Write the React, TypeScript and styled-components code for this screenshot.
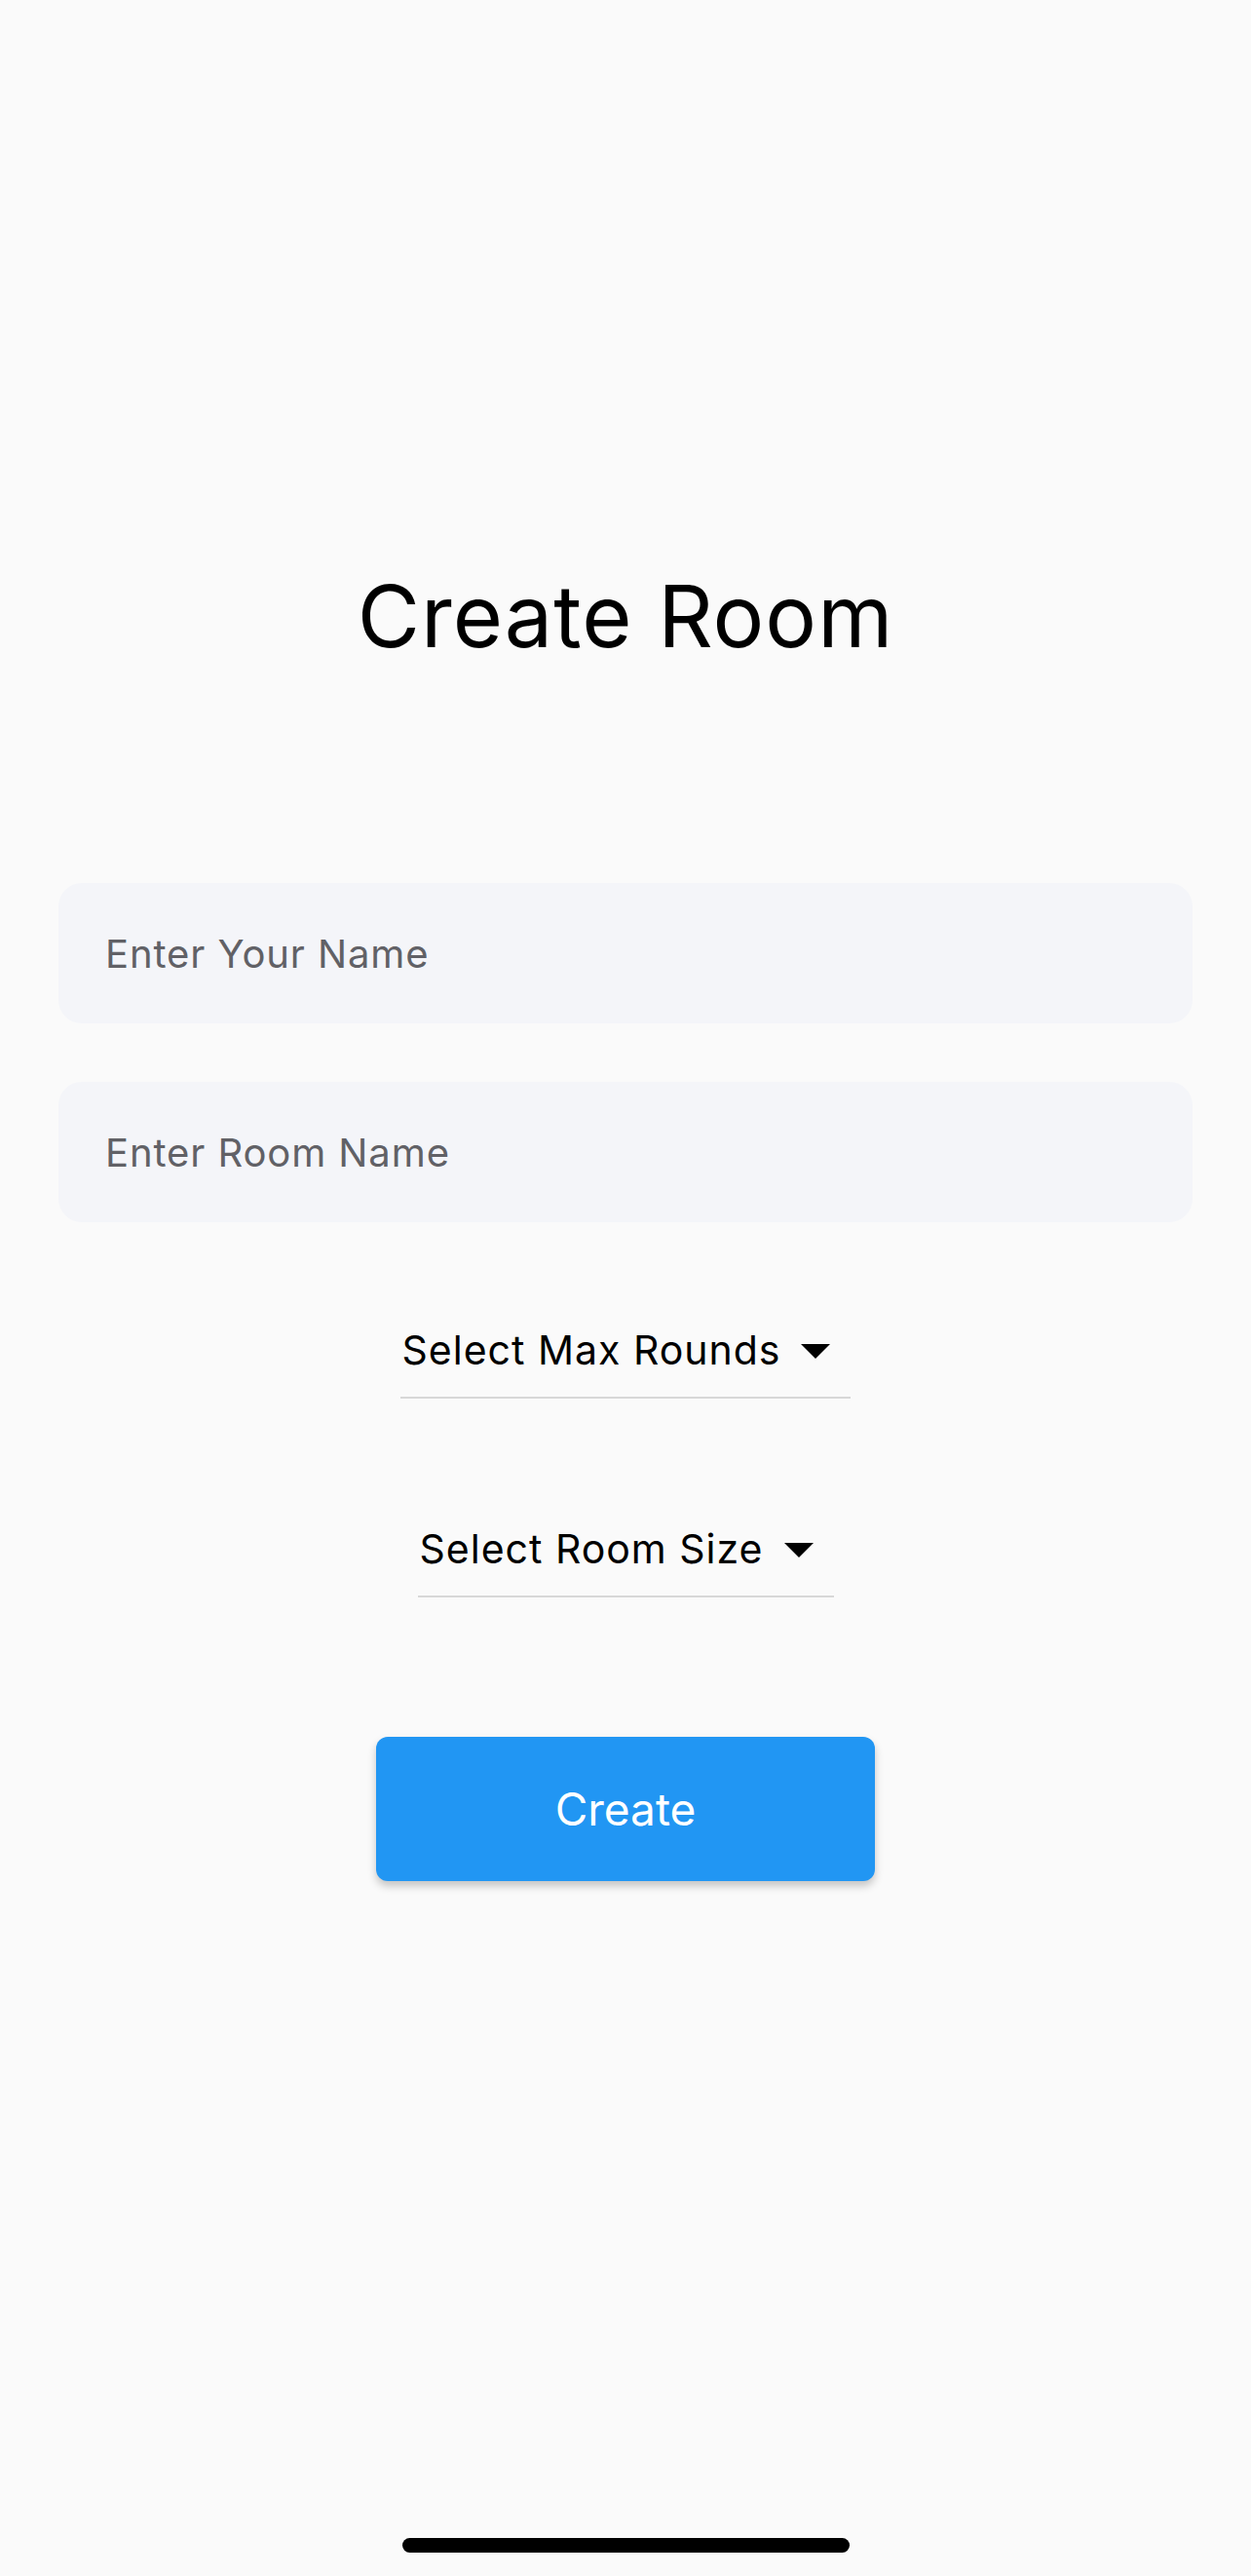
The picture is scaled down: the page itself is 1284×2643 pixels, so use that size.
import styled, { createGlobalStyle } from "styled-components";

const GlobalStyle = createGlobalStyle`
    html, body {
        margin: 0;
        padding: 0;
        background: #fafafa;
    }
    * {
        box-sizing: border-box;
    }
`;

const Screen = styled.div`
    min-height: 2643px;
    display: flex;
    flex-direction: column;
    align-items: center;
    padding: 579px 60px 24px;
    background: #fafafa;
    font-family: Inter, "Noto Sans", sans-serif;
`;

const Title = styled.h1`
    margin: 0;
    font-size: 88px;
    line-height: 106px;
    font-weight: 400;
    letter-spacing: 1px;
    color: #000;
`;

const Form = styled.div`
    width: 100%;
    display: flex;
    flex-direction: column;
    gap: 60px;
    margin-top: 221px;
`;

const Field = styled.input`
    width: 100%;
    height: 144px;
    border: none;
    outline: none;
    border-radius: 24px;
    background: #f4f5f9;
    padding: 0 48px;
    font-family: inherit;
    font-size: 40px;
    letter-spacing: 0.9px;
    color: #1c1c1e;

    &::placeholder {
        color: #616166;
    }
`;

const Dropdown = styled.button<{ $top: number }>`
    margin-top: ${(p) => p.$top}px;
    display: flex;
    align-items: center;
    height: 98px;
    padding: 0 0 0 2px;
    border: none;
    border-bottom: 2px solid #d8d8d8;
    background: transparent;
    font-family: inherit;
    font-size: 41px;
    letter-spacing: 1px;
    color: #000;
    cursor: pointer;
`;

const Arrow = styled.svg`
    width: 72px;
    height: 72px;
    flex-shrink: 0;
`;

const CreateButton = styled.button`
    margin-top: 143px;
    width: 512px;
    height: 148px;
    border: none;
    border-radius: 12px;
    background: #2196f3;
    color: #fff;
    font-family: inherit;
    font-size: 46px;
    box-shadow: 0 5px 9px rgba(0, 0, 0, 0.22);
    cursor: pointer;
`;

const HomeIndicator = styled.div`
    margin-top: auto;
    width: 459px;
    height: 15px;
    border-radius: 8px;
    background: #000;
`;

const DropArrow = () => (
    <Arrow viewBox="0 0 24 24">
        <path d="M7 10l5 5 5-5z" fill="#000" />
    </Arrow>
);

const App = () => {
    return (
        <>
            <GlobalStyle />
            <Screen>
                <Title>Create Room</Title>
                <Form>
                    <Field placeholder="Enter Your Name" />
                    <Field placeholder="Enter Room Name" />
                </Form>
                <Dropdown $top={83}>
                    Select Max Rounds
                    <DropArrow />
                </Dropdown>
                <Dropdown $top={106}>
                    Select Room Size
                    <DropArrow />
                </Dropdown>
                <CreateButton>Create</CreateButton>
                <HomeIndicator />
            </Screen>
        </>
    );
};

export default App;
